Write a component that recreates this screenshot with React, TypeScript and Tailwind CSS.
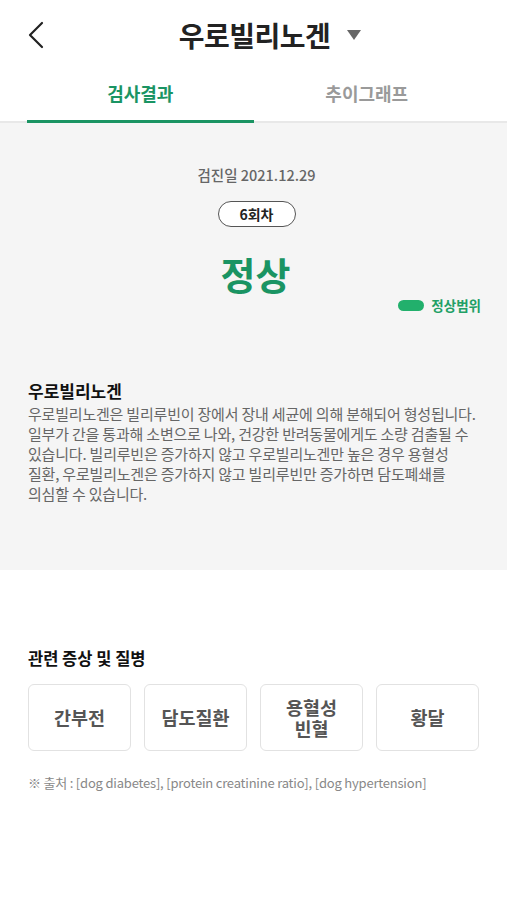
import React from 'react';

const font = { fontFamily: '"Noto Sans CJK KR", "Noto Sans", sans-serif' };

const related = ['간부전', '담도질환', '용혈성\n빈혈', '황달'];

const desc = [
  '우로빌리노겐은 빌리루빈이 장에서 장내 세균에 의해 분해되어 형성됩니다.',
  '일부가 간을 통과해 소변으로 나와, 건강한 반려동물에게도 소량 검출될 수',
  '있습니다. 빌리루빈은 증가하지 않고 우로빌리노겐만 높은 경우 용혈성',
  '질환, 우로빌리노겐은 증가하지 않고 빌리루빈만 증가하면 담도폐쇄를',
  '의심할 수 있습니다.',
];

export default function App() {
  return (
    <div className="w-[507px] h-[900px] bg-white text-[#222]" style={font}>
      <header className="relative h-[70px] flex items-center justify-center">
        <button className="absolute left-[24px] top-[20px] w-[24px] h-[30px] flex items-center justify-center">
          <svg width="18" height="28" viewBox="0 0 18 28" fill="none">
            <path d="M15 2 L3 14 L15 26" stroke="#222" strokeWidth="2.2" strokeLinecap="round" strokeLinejoin="round" />
          </svg>
        </button>
        <div className="flex items-center gap-[16px] ml-[34px]">
          <h1 className="text-[28px] font-bold tracking-[-0.5px] leading-none">우로빌리노겐</h1>
          <svg width="16" height="12" viewBox="0 0 16 12">
            <path d="M1 1 L15 1 L8 11 Z" fill="#666" />
          </svg>
        </div>
      </header>

      <nav className="flex px-[27px] border-b-2 border-[#e8e8e8] h-[53px]">
        <div className="flex-1 flex items-center justify-center border-b-[3px] border-[#1a9463] -mb-[2px] pb-[4px]">
          <span className="text-[18px] font-bold text-[#1a9463]">검사결과</span>
        </div>
        <div className="flex-1 flex items-center justify-center pb-[4px]">
          <span className="text-[18px] font-bold text-[#9a9a9a]">추이그래프</span>
        </div>
      </nav>

      <section className="bg-[#f5f5f5] h-[447px] px-[28px] pt-[40px]">
        <div className="flex flex-col items-center">
          <p className="text-[14.5px] font-medium text-[#666] leading-[24px] ml-[6px]">검진일 2021.12.29</p>
          <div className="mt-[14px] ml-[6px] w-[78px] h-[26px] rounded-full border border-[#555] bg-white flex items-center justify-center">
            <span className="text-[14px] font-bold text-[#222]">6회차</span>
          </div>
          <p className="mt-[22px] ml-[4px] text-[38px] font-bold text-[#1a9463] leading-[50px]">정상</p>
        </div>
        <div className="flex justify-end items-center gap-[7px] -mt-[4px] mr-[-2px]">
          <span className="w-[26px] h-[11px] rounded-full bg-[#22b06c]" />
          <span className="text-[13.5px] font-bold text-[#22a066]">정상범위</span>
        </div>

        <h2 className="mt-[64px] text-[17px] font-bold text-[#111] leading-[24px]">우로빌리노겐</h2>
        <div className="mt-[1px] text-[15px] text-[#666] leading-[20px] tracking-[-0.2px] -mr-[20px]">
          {desc.map((line) => (
            <p key={line} className="whitespace-nowrap">{line}</p>
          ))}
        </div>
      </section>

      <section className="px-[28px] pt-[76px]">
        <h3 className="text-[16.5px] font-bold text-[#111] leading-[24px]">관련 증상 및 질병</h3>
        <div className="mt-[14px] grid grid-cols-4 gap-[13px]">
          {related.map((r) => (
            <div
              key={r}
              className="h-[67px] rounded-[6px] border border-[#e2e2e2] bg-white flex items-center justify-center"
            >
              <span className="text-[18.5px] font-bold text-[#555] leading-[21px] text-center whitespace-pre-line">{r}</span>
            </div>
          ))}
        </div>
        <p className="mt-[22px] text-[13px] text-[#888] tracking-[-0.2px]">
          ※ 출처 : [dog diabetes], [protein creatinine ratio], [dog hypertension]
        </p>
      </section>
    </div>
  );
}
